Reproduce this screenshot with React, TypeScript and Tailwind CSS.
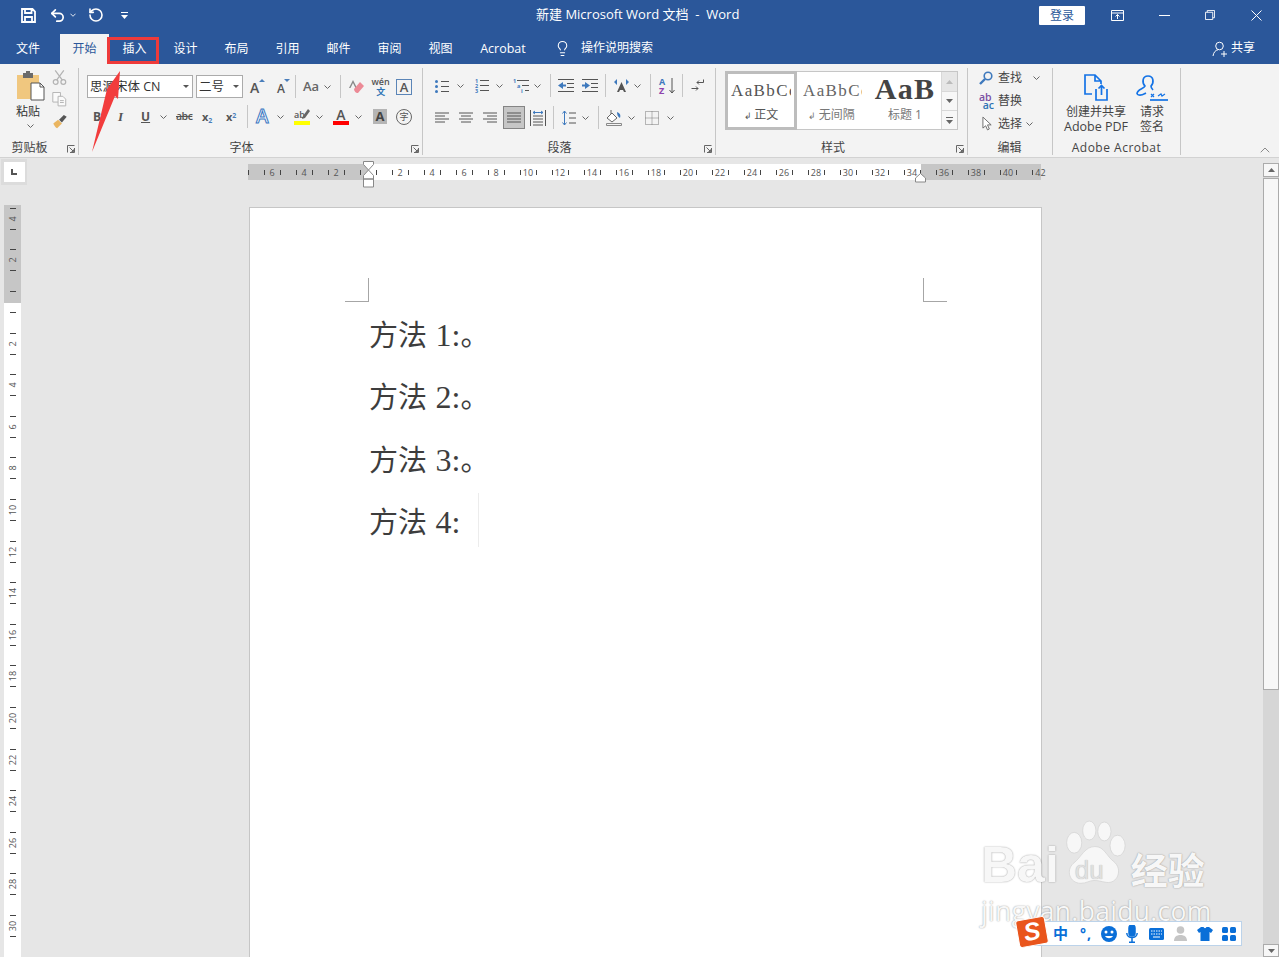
import React from "react";
import { Undo2, RotateCcw, Lightbulb, ChevronUp } from "lucide-react";

type P = { className?: string };

const Chev = ({ className = "" }: P) => (
  <svg viewBox="0 0 7 4" className={`w-[7px] h-[4px] shrink-0 ${className}`} fill="none" stroke="#666" strokeWidth="1"><path d="M.5.5l3 3 3-3" /></svg>
);
const Launcher = ({ className = "" }: P) => (
  <svg viewBox="0 0 8 8" className={`w-[8px] h-[8px] ${className}`} fill="none" stroke="#666" strokeWidth="1"><path d="M.5 7.500v-7h7M7.500 3v4.500H3M2.500 2.500l4 4M6.500 4.500v2h-2" /></svg>
);
const Sep = ({ className = "" }: P) => <span className={`w-px h-[23px] bg-[#c6c6c6] shrink-0 ${className}`} />;

const GroupLabel = ({ children, launcher, cls }: { children: React.ReactNode; launcher?: string; cls?: string }) => (
  <div className="relative h-[16px] mt-[11px] text-center leading-[16px] text-[12px] text-[#444] shrink-0">
    <span className={cls}>{children}</span>
    {launcher ? <Launcher className={launcher} /> : null}
  </div>
);

const Group = ({ w, children }: { w: string; children: React.ReactNode }) => (
  <div className={`${w} h-[87px] shrink-0 border-r border-[#c6c6c6] flex flex-col`}>{children}</div>
);

const Lines = ({ kind }: { kind: "l" | "c" | "r" | "j" }) => {
  const d =
    kind === "l" ? "M0 1h14M0 4h10M0 7h14M0 10h10" :
    kind === "c" ? "M0 1h14M2 4h10M0 7h14M2 10h10" :
    kind === "r" ? "M0 1h14M4 4h10M0 7h14M4 10h10" : "M0 1h14M0 4h14M0 7h14M0 10h14";
  return <svg viewBox="0 0 14 11" className="w-[14px] h-[11px] shrink-0" fill="none" stroke="#555"><path d={d} /></svg>;
};

const hLabels = ["6", "4", "2", "", "2", "4", "6", "8", "10", "12", "14", "16", "18", "20", "22", "24", "26", "28", "30", "32", "34", "36", "38", "40", "42"];
const vLabels = ["4", "2", "", "2", "4", "6", "8", "10", "12", "14", "16", "18", "20", "22", "24", "26", "28", "30"];

const Tab = ({ w, children }: { w: string; children: React.ReactNode }) => (
  <div className={`${w} text-center text-white text-[12px] leading-[29px]`}>{children}</div>
);

const Body = ({ n, end = true }: { n: string; end?: boolean }) => (
  <p className="h-[62.300px] leading-[62.300px] text-[29px] text-[#3d3d3d] whitespace-pre font-['Noto_Sans_CJK_SC',serif]">
    方法 <span className="ml-[2px] font-['Liberation_Serif',serif] text-[32px]">{n}:</span>{end ? <span>。</span> : null}
  </p>
);

export default function App() {
  return (
    <div className="relative w-full h-screen overflow-hidden bg-[#e6e6e6] flex flex-col font-['Open_Sans','Noto_Sans_CJK_SC',sans-serif]">
      {/* title + tabs */}
      <header className="h-[64px] bg-[#2b579a] shrink-0">
        <div className="relative h-[34px] flex items-center text-white pb-[4px]">
          <svg viewBox="0 0 15 15" className="w-[15px] h-[15px] ml-[21px]" fill="none" stroke="#fff" strokeWidth="1.800"><path d="M1 1h10.500L14 3.500V14H1zM4 1v4h6.500V1M4 14V9h7v5" /></svg>
          <Undo2 size={17} strokeWidth={2.4} className="ml-[13px]" />
          <svg viewBox="0 0 7 4" className="w-[6px] h-[4px] ml-[4px]" fill="none" stroke="#fff"><path d="M.5.5l3 3 3-3" /></svg>
          <RotateCcw size={16} strokeWidth={2.4} className="ml-[12px]" />
          <svg viewBox="0 0 7 7" className="w-[7px] h-[7px] ml-[17px]" fill="#fff"><path d="M0 0h7v1H0zM0 3h7L3.500 7z" /></svg>
          <div className="flex-1 pl-[408px] text-[13px] whitespace-pre">新建 Microsoft Word 文档  -  Word</div>
          <div className="w-[46px] h-[19px] bg-white rounded-[1px] text-[#2b579a] text-[12px] leading-[19px] text-center mr-[26px]">登录</div>
          <svg viewBox="0 0 13 11" className="w-[13px] h-[11px] mr-[35px]" fill="none" stroke="#fff"><path d="M.5.500h12v10H.500zM.5 3h12M6.500 9V4.500M4.500 6.500l2-2 2 2" /></svg>
          <span className="w-[11px] h-px bg-white mr-[35px]" />
          <svg viewBox="0 0 11 11" className="w-[10px] h-[10px] mr-[36px]" fill="none" stroke="#fff"><path d="M.5 2.500h8v8h-8zM2.500 2.500v-2h8v8h-2" /></svg>
          <svg viewBox="0 0 11 11" className="w-[11px] h-[11px] mr-[17px]" fill="none" stroke="#fff"><path d="M.5.500l10 10M10.500.5l-10 10" /></svg>
        </div>
        <div className="flex h-[30px] items-stretch">
          <div className="w-[60px] pl-[16px] text-white text-[12px] leading-[29px]">文件</div>
          <div className="w-[49px] bg-[#f3f3f3] text-[#2b579a] text-center text-[12px] leading-[29px]">开始</div>
          <Tab w="w-[51px]">插入</Tab>
          <Tab w="w-[51px]">设计</Tab>
          <Tab w="w-[51px]">布局</Tab>
          <Tab w="w-[51px]">引用</Tab>
          <Tab w="w-[51px]">邮件</Tab>
          <Tab w="w-[51px]">审阅</Tab>
          <Tab w="w-[51px]">视图</Tab>
          <Tab w="w-[74px]"><span className="text-[12.500px]">Acrobat</span></Tab>
          <div className="flex items-center text-white text-[12px] ml-[14px] pb-[2px]">
            <Lightbulb size={17} strokeWidth={1.500} />
            <span className="ml-[10px]">操作说明搜索</span>
          </div>
          <div className="flex items-center text-white text-[12px] ml-auto mr-[24px] pb-[2px]">
            <svg viewBox="0 0 16 16" className="w-[16px] h-[16px] mr-[3px] mt-[2px]" fill="none" stroke="#fff"><circle cx="7.500" cy="5" r="3.800" /><path d="M1 15c.5-3.500 2.500-6 5-6.200M9 13h6M12 10v6" /></svg>
            共享
          </div>
        </div>
      </header>

      {/* ribbon */}
      <section className="h-[94px] shrink-0 bg-[#f3f3f3] border-b border-[#d2d2d2] flex pt-[4px] relative">
        {/* clipboard */}
        <Group w="w-[79px]">
          <div className="flex h-[61px]">
            <div className="ml-[16px] mt-[3px] w-[29px] flex flex-col items-start">
              <svg viewBox="0 0 29 30" className="w-[29px] h-[30px]">
                <path d="M1 4h22v24H1z" fill="#f0c77f" />
                <path d="M7 2h10v5H7z" fill="#6b6b6b" /><path d="M10 0h4v3h-4z" fill="#6b6b6b" />
                <path d="M15 12h9l4 4v13H15z" fill="#fff" stroke="#555" /><path d="M24 12v4h4" fill="none" stroke="#555" />
              </svg>
              <span className="text-[12px] leading-[16px] text-[#333] mt-[3px] whitespace-nowrap">粘贴</span>
              <Chev className="mt-[4px] ml-[11px]" />
            </div>
            <div className="ml-[7px] flex flex-col shrink-0">
              <svg viewBox="0 0 15 16" className="w-[15px] h-[16px] mt-[2px]" fill="none" stroke="#b3b3b3" strokeWidth="1.300"><path d="M3 .5l7.500 10M12 .5L4.500 10.500" /><circle cx="3.500" cy="12.500" r="2.500" /><circle cx="11.500" cy="12.500" r="2.500" /></svg>
              <svg viewBox="0 0 15 15" className="w-[15px] h-[15px] mt-[7px]" fill="#fafafa" stroke="#b3b3b3"><path d="M.5.500h8v10h-8z" /><path d="M6 4.500h5l3 3v7H6z" /><path d="M8 9h4M8 11h4" fill="none" /></svg>
              <svg viewBox="0 0 16 16" className="w-[16px] h-[16px] mt-[7px]"><path d="M1 10l5-4 4 4-5 5c-2-1-3-3-4-5z" fill="#eab560" /><path d="M7 6l5-5 3 2-5 6z" fill="#555" /></svg>
            </div>
          </div>
          <GroupLabel launcher="absolute right-[3px] top-[5px]" cls="mr-[19px]">剪贴板</GroupLabel>
        </Group>

        {/* font */}
        <Group w="w-[344px]">
          <div className="mt-[7px] h-[23px] flex items-center">
            <div className="ml-[8px] w-[106px] h-[23px] bg-white border border-[#ababab] flex items-center pl-[2px] pr-[3px] text-[12.500px] text-[#333]">
              <span className="flex-1 whitespace-nowrap pt-[1px]">思源宋体 CN</span>
              <svg viewBox="0 0 6 3" className="w-[6px] h-[3px]" fill="#555"><path d="M0 0h6L3 3z" /></svg>
            </div>
            <div className="ml-[3px] w-[47px] h-[23px] bg-white border border-[#ababab] flex items-center pl-[2px] pr-[3px] text-[12.500px] text-[#333]">
              <span className="flex-1 pt-[1px]">二号</span>
              <svg viewBox="0 0 6 3" className="w-[6px] h-[3px]" fill="#555"><path d="M0 0h6L3 3z" /></svg>
            </div>
            <span className="ml-[7px] w-[15px] h-[16px] relative text-[14px] leading-[18px] font-semibold text-[#555]">A<i className="absolute right-0 top-0 w-0 h-0 border-x-[3px] border-b-[3px] border-x-transparent border-b-[#4a7ebb]" /></span>
            <span className="ml-[12px] w-[13px] h-[16px] relative text-[12px] leading-[19px] font-semibold text-[#555]">A<i className="absolute right-0 top-0 w-0 h-0 border-x-[3px] border-t-[3px] border-x-transparent border-t-[#4a7ebb]" /></span>
            <Sep className="ml-[5px]" />
            <span className="ml-[7px] text-[13px] leading-none text-[#666] font-semibold">Aa</span>
            <Chev className="ml-[5px]" />
            <Sep className="ml-[9px]" />
            <svg viewBox="0 0 16 16" className="w-[16px] h-[16px] ml-[8px]"><path d="M4 1L0 9h1.500l2.500-5 2.500 5H8z" fill="#888" /><path d="M5 10l6-7 4 4-6 7c-2 .5-4-2-4-4z" fill="#ec8a96" /></svg>
            <span className="ml-[8px] w-[15px] flex flex-col items-center leading-none">
              <span className="text-[9px] font-semibold text-[#555] h-[10px]">wén</span>
              <span className="text-[9px] text-[#2f74b5] font-semibold">文</span>
            </span>
            <span className="ml-[8px] w-[16px] h-[16px] border border-[#5b85b7] text-center text-[13px] leading-[14px] font-semibold text-[#555]">A</span>
          </div>
          <div className="mt-[8px] h-[23px] pb-[2px] flex items-center text-[#555]">
            <span className="ml-[14px] w-[9px] text-[12px] font-bold leading-none">B</span>
            <span className="ml-[16px] w-[7px] text-[13px] italic font-semibold leading-none font-['Liberation_Serif',serif]">I</span>
            <span className="ml-[16px] w-[9px] text-[12px] font-bold leading-[12px] underline">U</span>
            <Chev className="ml-[10px]" />
            <span className="ml-[9px] w-[16px] text-[10.500px] font-semibold leading-none line-through tracking-[-0.500px]">abc</span>
            <span className="ml-[10px] w-[13px] text-[11px] font-bold leading-none">x<sub className="text-[7px] text-[#4a7ebb]">2</sub></span>
            <span className="ml-[11px] w-[13px] text-[11px] font-bold leading-none">x<sup className="text-[7px] text-[#4a7ebb]">2</sup></span>
            <Sep className="ml-[8px]" />
            <span className="ml-[8px] w-[17px] text-[19px] leading-none font-semibold text-white [-webkit-text-stroke:1px_#3b78c2]">A</span>
            <Chev className="ml-[4px]" />
            <span className="relative ml-[10px] w-[16px] flex flex-col items-start">
              <span className="text-[9px] leading-[12px] font-semibold">ab</span>
              <svg viewBox="0 0 8 10" className="absolute right-0 top-0 w-[8px] h-[10px]" fill="#666"><path d="M6 0l2 2-5 7-3 1 1-3z" /></svg>
              <span className="w-[16px] h-[4px] bg-[#ffff00]" />
            </span>
            <Chev className="ml-[6px]" />
            <span className="ml-[10px] w-[16px] flex flex-col items-center">
              <span className="text-[14px] leading-[12px] font-semibold">A</span>
              <span className="w-[16px] h-[4px] bg-[#ff0000]" />
            </span>
            <Chev className="ml-[6px]" />
            <span className="ml-[11px] w-[14px] h-[15px] bg-[#b5b5b5] text-center text-[13px] leading-[15px] font-bold text-[#444]">A</span>
            <span className="ml-[9px] w-[16px] h-[16px] rounded-full border border-[#666] text-center text-[9px] leading-[14px]">字</span>
          </div>
          <GroupLabel launcher="absolute right-[3px] top-[5px]" cls="mr-[18px]">字体</GroupLabel>
        </Group>

        {/* paragraph */}
        <Group w="w-[293px]">
          <div className="mt-[7px] h-[23px] pb-[2px] flex items-center">
            <svg viewBox="0 0 14 14" className="w-[14px] h-[14px] ml-[12px]"><circle cx="1.500" cy="2.500" r="1.500" fill="#3e79bd" /><circle cx="1.500" cy="7.500" r="1.500" fill="#3e79bd" /><circle cx="1.500" cy="12.500" r="1.500" fill="#3e79bd" /><path d="M6 2.500h8M6 7.500h8M6 12.500h8" stroke="#555" /></svg>
            <Chev className="ml-[8px]" />
            <svg viewBox="0 0 14 15" className="w-[14px] h-[15px] ml-[11px]"><text x="0" y="5" fontSize="5.500" fontWeight="700" fill="#3e79bd">1</text><text x="0" y="10" fontSize="5.500" fontWeight="700" fill="#3e79bd">2</text><text x="0" y="15" fontSize="5.500" fontWeight="700" fill="#3e79bd">3</text><path d="M5 2.500h9M5 7.500h9M5 12.500h9" stroke="#555" /></svg>
            <Chev className="ml-[7px]" />
            <svg viewBox="0 0 17 16" className="w-[17px] h-[16px] ml-[10px]"><text x="0" y="5" fontSize="5.500" fontWeight="700" fill="#3e79bd">1</text><text x="4" y="10" fontSize="5.500" fontWeight="700" fill="#3e79bd">a</text><text x="8" y="15" fontSize="5.500" fontWeight="700" fill="#3e79bd">i</text><path d="M4 2.500h12M9 7.500h7M12 12.500h4" stroke="#555" /></svg>
            <Chev className="ml-[4px]" />
            <Sep className="ml-[9px]" />
            <svg viewBox="0 0 16 13" className="w-[16px] h-[13px] ml-[7px]"><path d="M0 6.500L5 3v2.500h3v2H5V10z" fill="#3e79bd" /><path d="M0 .5h16M9 4.500h7M9 8.500h7M0 12.500h16" stroke="#555" /></svg>
            <svg viewBox="0 0 16 13" className="w-[16px] h-[13px] ml-[8px]"><path d="M8 6.500L3 3v2.500H0v2h3V10z" fill="#3e79bd" /><path d="M0 .5h16M9 4.500h7M9 8.500h7M0 12.500h16" stroke="#555" /></svg>
            <Sep className="ml-[7px]" />
            <svg viewBox="0 0 17 15" className="w-[17px] h-[15px] ml-[7px]"><path d="M8.500 4L4 14h2l1-2h3l1 2h2z" fill="#555" /><path d="M1 4l3-3v6zM16 4l-3-3v6z" fill="#3e79bd" /></svg>
            <Chev className="ml-[4px]" />
            <Sep className="ml-[9px]" />
            <span className="relative ml-[8px] w-[16px] h-[18px] flex flex-col text-[9px] leading-[9px] font-bold">
              <span className="text-[#3e79bd]">A</span>
              <span className="text-[#8e44ad]">Z</span>
              <svg viewBox="0 0 6 16" className="absolute right-0 top-[1px] w-[6px] h-[16px]" fill="none" stroke="#555"><path d="M3 0v15M.5 12L3 15l2.500-3" /></svg>
            </span>
            <Sep className="ml-[7px]" />
            <svg viewBox="0 0 13 13" className="w-[13px] h-[13px] ml-[8px]" fill="none" stroke="#555"><path d="M12.500.5v3H6M8 1.500L6 3.500l2 2M.5 9.500H7M5 7.500l2 2-2 2" /></svg>
          </div>
          <div className="mt-[8px] h-[23px] flex items-center">
            <span className="ml-[12px]"><Lines kind="l" /></span>
            <span className="ml-[10px]"><Lines kind="c" /></span>
            <span className="ml-[10px]"><Lines kind="r" /></span>
            <span className="ml-[6px] w-[22px] h-[23px] bg-[#c6c6c6] border border-[#848484] flex items-center justify-center"><Lines kind="j" /></span>
            <svg viewBox="0 0 16 16" className="w-[16px] h-[16px] ml-[5px]" fill="none" stroke="#555"><path d="M.5 0v16M15.500 0v16M3 6h10M3 9h10M3 12h10M3 15h10" /><path d="M3 2.500h10M5 1L3 2.500 5 4M11 1l2 1.500L11 4" stroke="#3e79bd" /></svg>
            <Sep className="ml-[7px]" />
            <svg viewBox="0 0 14 16" className="w-[14px] h-[16px] ml-[8px]" fill="none"><path d="M2.500 1v14M.5 3.500L2.500 1l2 2.500M.5 12.500l2 2.500 2-2.500" stroke="#3e79bd" /><path d="M7 3h7M7 8h7M7 13h7" stroke="#555" /></svg>
            <Chev className="ml-[6px]" />
            <Sep className="ml-[9px]" />
            <svg viewBox="0 0 16 16" className="w-[16px] h-[16px] ml-[7px]" fill="none"><path d="M1 8l5-5 5 5-5 4z" stroke="#666" fill="#fff" /><path d="M5 0v4" stroke="#666" /><path d="M11 2c3 1 4 3 3 6-2-1-3-3-3-6z" fill="#3e79bd" /><path d="M.5 13.500h15v2H.5z" stroke="#888" /></svg>
            <Chev className="ml-[6px]" />
            <svg viewBox="0 0 14 14" className="w-[14px] h-[14px] ml-[10px]" fill="none" stroke="#777" strokeDasharray="1 1"><path d="M.5.500h13v13H.500zM7 .5v13M.5 7h13" /></svg>
            <Chev className="ml-[8px]" />
          </div>
          <GroupLabel launcher="absolute right-[3px] top-[5px]" cls="mr-[19px]">段落</GroupLabel>
        </Group>

        {/* styles */}
        <Group w="w-[252px]">
          <div className="ml-[9px] mt-[3px] w-[233px] h-[59px] shrink-0 flex border border-[#c6c6c6] bg-white">
            <div className="w-[72px] border-[3px] border-[#bdbdbd] -m-px h-[59px] flex flex-col items-center overflow-hidden shrink-0">
              <span className="self-start ml-[3px] w-[60px] overflow-hidden text-[17px] leading-[30px] mt-[2px] whitespace-nowrap text-[#555] font-['Liberation_Serif',serif] tracking-[1.400px]">AaBbCc</span>
              <span className="text-[12px] leading-[18px] text-[#555]"><span className="text-[9px]">↲ </span>正文</span>
            </div>
            <div className="w-[71px] flex flex-col items-center overflow-hidden pt-[4px] shrink-0">
              <span className="self-start ml-[7px] w-[59px] overflow-hidden text-[17px] leading-[30px] whitespace-nowrap text-[#666] font-['Liberation_Serif',serif] tracking-[1.400px]">AaBbCc</span>
              <span className="text-[12px] leading-[18px] text-[#777] whitespace-nowrap"><span className="text-[9px]">↲ </span>无间隔</span>
            </div>
            <div className="w-[74px] flex flex-col items-center overflow-hidden pl-[2px] shrink-0">
              <span className="text-[30px] leading-[33px] whitespace-nowrap text-[#444] font-bold font-['Liberation_Serif',serif] tracking-[1.200px]">AaB</span>
              <span className="text-[12px] leading-[18px] text-[#777] mt-[1px] whitespace-nowrap">标题 1</span>
            </div>
            <div className="flex-1 flex flex-col border-l border-[#d8d8d8]">
              <div className="h-[20px] bg-[#e6e6e6] border-b border-[#d8d8d8] flex items-center justify-center"><svg viewBox="0 0 7 4" className="w-[7px] h-[4px]" fill="#bbb"><path d="M3.500 0L7 4H0z" /></svg></div>
              <div className="h-[19px] bg-[#f7f7f7] border-b border-[#d8d8d8] flex items-center justify-center"><svg viewBox="0 0 7 4" className="w-[7px] h-[4px]" fill="#666"><path d="M0 0h7L3.500 4z" /></svg></div>
              <div className="flex-1 bg-[#f7f7f7] flex items-center justify-center"><svg viewBox="0 0 7 7" className="w-[7px] h-[7px]" fill="#666"><path d="M0 0h7v1H0zM0 3h7L3.500 7z" /></svg></div>
            </div>
          </div>
          <div className="-mt-[1px]">
            <GroupLabel launcher="absolute right-[3px] top-[5px]" cls="mr-[17px]">样式</GroupLabel>
          </div>
        </Group>

        {/* editing */}
        <Group w="w-[85px]">
          <div className="pl-[11px] h-[61px] text-[12px] text-[#444] flex flex-col">
            <div className="h-[23px] -mt-[2px] flex items-center shrink-0">
              <svg viewBox="0 0 14 14" className="w-[14px] h-[14px]" fill="none" stroke="#3e79bd" strokeWidth="1.600"><circle cx="9" cy="5" r="3.800" /><path d="M6 8L1 13" strokeWidth="2.400" /></svg>
              <span className="ml-[5px]">查找</span><Chev className="ml-[11px]" />
            </div>
            <div className="h-[23px] flex items-center shrink-0">
              <span className="w-[15px] flex flex-col leading-[8px] text-[10.500px] font-semibold"><span className="text-[#7a4fa3]">ab</span><span className="text-[#2f74b5] text-right">ac</span></span>
              <span className="ml-[4px]">替换</span>
            </div>
            <div className="h-[23px] flex items-center shrink-0">
              <svg viewBox="0 0 12 16" className="w-[11px] h-[15px] ml-[3px]" fill="#fff" stroke="#666"><path d="M1 1v12l3-2.500 2 4.500 2-1-2-4.500h4z" /></svg>
              <span className="ml-[5px]">选择</span><Chev className="ml-[4px]" />
            </div>
          </div>
          <GroupLabel cls="ml-[-1px]">编辑</GroupLabel>
        </Group>

        {/* acrobat */}
        <Group w="w-[128px]">
          <div className="flex h-[61px] pt-[6px] text-[12.500px] leading-[15px] text-[#444] text-center">
            <div className="w-[72px] ml-[7px] flex flex-col items-center shrink-0">
              <svg viewBox="0 0 24 27" className="w-[24px] h-[27px] shrink-0" fill="none" stroke="#1473e6" strokeWidth="1.700"><path d="M8 20H1V1h10l6 6v3M11 1v6h6" /><path d="M12 15v11h11V15M17.500 21v-9M14.500 14.500l3-3 3 3" /></svg>
              <span className="mt-[3px] text-[12px] whitespace-nowrap">创建并共享</span>
              <span className="whitespace-nowrap">Adobe PDF</span>
            </div>
            <div className="w-[28px] ml-[6px] flex flex-col items-center shrink-0">
              <svg viewBox="0 0 32 27" className="w-[32px] h-[27px] shrink-0" fill="none" stroke="#1473e6" strokeWidth="1.700"><path d="M1 20c0-5 7-5 8-8-3-3-3-10 3-10s6 7 3 10c0 2 1 3 2 4M1 20c3 3 7 0 9-1" /><path d="M14 26h18" /><path d="M15 20l3 3M18 20l-3 3M22 22l3-2 1 2 3-2" strokeWidth="1.200" /></svg>
              <span className="mt-[3px] text-[12px]">请求</span>
              <span className="text-[12px]">签名</span>
            </div>
          </div>
          <GroupLabel cls="tracking-[0.500px]">Adobe Acrobat</GroupLabel>
        </Group>

        <ChevronUp size={16} strokeWidth={1} className="absolute right-[6px] bottom-[-1px] text-[#555]" />
      </section>

      {/* workspace */}
      <main className="flex-1 min-h-0 flex">
        <div className="w-[248px] shrink-0">
          <div className="ml-[1px] mt-[1px] w-[26px] h-[26px] bg-[#dcdcdc] flex items-center justify-center">
            <span className="w-[21px] h-[20px] bg-white flex items-center justify-center">
              <svg viewBox="0 0 6 6" className="w-[6px] h-[6px]" fill="none" stroke="#555" strokeWidth="2"><path d="M1 0v5h5" /></svg>
            </span>
          </div>
          <div className="ml-[4px] mt-[20px] w-[17px] h-[760px] overflow-hidden bg-[linear-gradient(to_bottom,#c6c6c6_98px,#fff_98px)]">
            <div className="-mt-[7px]">
              {vLabels.map((l, i) => (
                <div key={i} className="h-[41.600px] flex flex-col items-center justify-center gap-[5px] text-[9px] leading-[10px] text-[#555]">
                  <span className="w-[6px] h-px bg-[#444]" />
                  <span className="-rotate-90 h-[10px] w-[14px] text-center">{l}</span>
                  <span className="w-[6px] h-px bg-[#444]" />
                </div>
              ))}
            </div>
          </div>
        </div>

        <div className="w-[793px] shrink-0 relative">
          <div className="mt-[6px] h-[16px] bg-[linear-gradient(to_right,#c6c6c6_120px,#fff_120px,#fff_673px,#c6c6c6_673px)]">
            <div className="flex">
              <div className="w-[8px] h-[16px] shrink-0 flex items-center"><span className="w-px h-[5px] bg-[#444]" /></div>
              {hLabels.map((l, i) => (
                <div key={i} className="w-[32px] h-[16px] shrink-0 flex items-center justify-between px-[7.500px] text-[9px] leading-[16px] text-[#555]">
                  <span className="w-px h-[5px] bg-[#444] shrink-0" />
                  <span className="w-0 flex justify-center whitespace-nowrap pt-[1px]">{l}</span>
                  {i < hLabels.length - 1 ? <span className="w-px h-[5px] bg-[#444] shrink-0" /> : <span />}
                </div>
              ))}
            </div>
          </div>
          <svg viewBox="0 0 12 27" className="absolute left-[115px] top-[3px] w-[12px] h-[27px]" fill="#fff" stroke="#888"><path d="M.5.500h10v3L5.500 9l-5-5.500zM5.500 9l5 5.500V18H.5v-3.500zM.5 18h10v8H.500z" /></svg>
          <svg viewBox="0 0 12 10" className="absolute left-[667px] top-[15px] w-[12px] h-[10px]" fill="#fff" stroke="#888"><path d="M5.500.5l5 4.500v4H.5V5z" /></svg>

          <div className="ml-[1px] mt-[27px] w-[793px] h-[800px] bg-white border border-[#c6c6c6]">
            <div className="flex justify-between pt-[70px] pl-[95px] pr-[94px]">
              <span className="w-[24px] h-[24px] border-r border-b border-[#a6a6a6]" />
              <span className="w-[24px] h-[24px] border-l border-b border-[#a6a6a6]" />
            </div>
            <div className="ml-[119px]">
              <Body n="1" />
              <Body n="2" />
              <Body n="3" />
              <div className="flex items-center h-[62.300px]">
                <Body n="4" end={false} />
                <span className="ml-[18px] w-px h-[54px] bg-[#ececec]" />
              </div>
            </div>
          </div>
        </div>

        <div className="flex-1" />

        {/* scrollbar */}
        <div className="w-[16px] shrink-0 mt-[5px] bg-[#d6d6d6] flex flex-col">
          <div className="h-[14px] bg-[#f7f7f7] border border-[#ababab] flex items-center justify-center"><svg viewBox="0 0 7 4" className="w-[7px] h-[4px]" fill="#666"><path d="M3.500 0L7 4H0z" /></svg></div>
          <div className="h-[512px] bg-[#f7f7f7] border border-[#ababab] mt-px" />
          <div className="flex-1" />
          <div className="h-[13px] bg-[#f7f7f7] border border-[#ababab] flex items-center justify-center"><svg viewBox="0 0 7 4" className="w-[7px] h-[4px]" fill="#666"><path d="M0 0h7L3.500 4z" /></svg></div>
        </div>
      </main>

      {/* red annotation */}
      <div className="absolute left-[107px] top-[37px] w-[52px] h-[27px] border-[3px] border-[#ee3a3a]" />
      <svg viewBox="0 0 1279 957" className="absolute left-0 top-0 w-[1279px] h-[957px] pointer-events-none">
        <path d="M120 71L107 89 92 152 115 96 118 99z" fill="#f23c3c" />
      </svg>

      {/* watermark */}
      <div className="absolute left-[981px] top-[818px] w-[235px] h-[112px] text-[#f7f7f7] [text-shadow:0_0_1.500px_rgba(0,0,0,0.45)]">
        <div className="flex items-end h-[75px]">
          <span className="text-[50px] leading-[56px] font-bold font-['Liberation_Sans',sans-serif]">Bai</span>
          <span className="relative w-[66px] h-[75px] shrink-0 ml-[2px]">
            <svg viewBox="0 0 70 75" className="w-[66px] h-[75px]" fill="#f7f7f7" stroke="#cfcfcf" strokeWidth="0.700">
              <ellipse cx="14" cy="24" rx="8" ry="11" /><ellipse cx="30" cy="11" rx="7" ry="10" /><ellipse cx="46" cy="12" rx="7" ry="10" /><ellipse cx="60" cy="27" rx="8" ry="11" />
              <path d="M36 28c10 0 12 10 20 16 10 8 4 24-8 22-6-1-8-2-13-2s-8 3-14 3c-12 0-16-14-8-21 9-7 12-18 23-18z" />
            </svg>
            <span className="absolute left-[14px] top-[39px] text-[26px] leading-[26px] text-[#e0e0e0] font-['Liberation_Sans',sans-serif] [text-shadow:0_0_1px_#aaa]">du</span>
          </span>
          <span className="text-[37px] leading-[44px] font-bold ml-[4px] whitespace-nowrap">经验</span>
        </div>
        <div className="text-[26.500px] leading-[30px] mt-[3px] font-['Open_Sans',sans-serif] whitespace-nowrap tracking-[0.300px]">jingyan.baidu.com</div>
      </div>

      {/* IME bar */}
      <div className="absolute left-[1030px] top-[921px] w-[212px] h-[25px] bg-white border border-[#bcd3ea] flex items-center pl-[22px] text-[#0a6fd8]">
        <span className="text-[15px] leading-none font-bold w-[16px]">中</span>
        <span className="ml-[11px] w-[14px] text-[14px] font-bold leading-[10px] tracking-[1px]">°,</span>
        <svg viewBox="0 0 16 16" className="w-[16px] h-[16px] ml-[7px]"><circle cx="8" cy="8" r="8" fill="#0a6fd8" /><circle cx="5" cy="6" r="1.500" fill="#fff" /><circle cx="11" cy="6" r="1.500" fill="#fff" /><path d="M4 10c2 3 6 3 8 0z" fill="#fff" /></svg>
        <svg viewBox="0 0 12 18" className="w-[12px] h-[18px] ml-[9px]" fill="none" stroke="#0a6fd8" strokeWidth="1.500"><rect x="3" y="0" width="6" height="11" rx="3" fill="#0a6fd8" /><path d="M.8 8c0 6 10.400 6 10.400 0M6 13v4M3 17.200h6" /></svg>
        <svg viewBox="0 0 15 12" className="w-[15px] h-[12px] ml-[11px]"><rect width="15" height="12" rx="1.500" fill="#0a6fd8" /><path d="M2 3h11M2 6h11" stroke="#fff" strokeDasharray="1.500 1" /><path d="M4 9h7" stroke="#fff" /></svg>
        <svg viewBox="0 0 13 15" className="w-[13px] h-[15px] ml-[10px]" fill="#c6c6c6"><circle cx="6.500" cy="4" r="3.800" /><path d="M0 15c0-4 2.500-6 6.500-6s6.500 2 6.500 6z" /></svg>
        <svg viewBox="0 0 16 14" className="w-[16px] h-[14px] ml-[10px]" fill="#0a6fd8"><path d="M4 0h2.500c.5 1.500 2.500 1.500 3 0H12l4 3-2 3-1.500-1v9h-9V5L2 6 0 3z" /></svg>
        <svg viewBox="0 0 14 14" className="w-[14px] h-[14px] ml-[9px]" fill="#0a6fd8"><rect width="6" height="6" rx="1.500" /><rect x="8" width="6" height="6" rx="1.500" /><rect y="8" width="6" height="6" rx="1.500" /><rect x="8" y="8" width="6" height="6" rx="1.500" /></svg>
      </div>
      <div className="absolute left-[1017px] top-[918px] w-[30px] h-[28px] bg-[#e9551c] rounded-[3px] -rotate-[10deg] border border-white text-white text-[25px] leading-[25px] font-black text-center font-['Liberation_Sans',sans-serif] italic">S</div>
    </div>
  );
}
